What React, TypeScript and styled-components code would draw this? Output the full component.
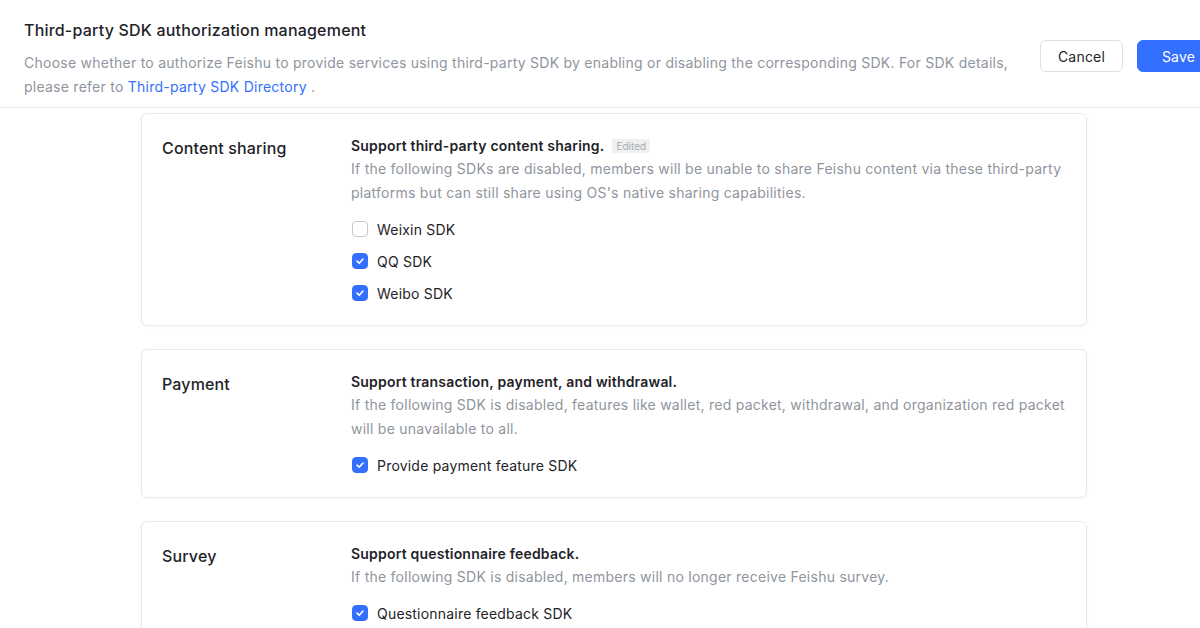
import React from "react";
import styled, { createGlobalStyle } from "styled-components";

const GlobalStyle = createGlobalStyle`
	html, body {
		margin: 0;
		padding: 0;
		background: #ffffff;
		overflow: hidden;
	}
	body {
		font-family: Inter, "Liberation Sans", Arial, sans-serif;
		color: #1f2329;
		-webkit-font-smoothing: antialiased;
	}
`;

interface ISdkItem {
	name: string;
	checked: boolean;
}

interface ISection {
	label: string;
	title: string;
	edited?: boolean;
	description: string;
	items: ISdkItem[];
}

const sections: ISection[] = [
	{
		label: "Content sharing",
		title: "Support third-party content sharing.",
		edited: true,
		description:
			"If the following SDKs are disabled, members will be unable to share Feishu content via these third-party platforms but can still share using OS's native sharing capabilities.",
		items: [
			{ name: "Weixin SDK", checked: false },
			{ name: "QQ SDK", checked: true },
			{ name: "Weibo SDK", checked: true },
		],
	},
	{
		label: "Payment",
		title: "Support transaction, payment, and withdrawal.",
		description:
			"If the following SDK is disabled, features like wallet, red packet, withdrawal, and organization red packet will be unavailable to all.",
		items: [{ name: "Provide payment feature SDK", checked: true }],
	},
	{
		label: "Survey",
		title: "Support questionnaire feedback.",
		description:
			"If the following SDK is disabled, members will no longer receive Feishu survey.",
		items: [{ name: "Questionnaire feedback SDK", checked: true }],
	},
];

const CheckIcon = (): JSX.Element => (
	<svg width="10" height="10" viewBox="0 0 10 10" fill="none">
		<path
			d="M2 5.2 4.2 7.2 8 3"
			stroke="#ffffff"
			strokeWidth="1.6"
			strokeLinecap="round"
			strokeLinejoin="round"
		/>
	</svg>
);

const SdkOption = ({ item }: { item: ISdkItem }): JSX.Element => (
	<Option>
		<Box $checked={item.checked}>{item.checked && <CheckIcon />}</Box>
		<span>{item.name}</span>
	</Option>
);

const SectionCard = ({ section }: { section: ISection }): JSX.Element => (
	<Card>
		<Label>{section.label}</Label>
		<div>
			<CardTitle>
				{section.title}
				{section.edited && <Tag>Edited</Tag>}
			</CardTitle>
			<CardDesc>{section.description}</CardDesc>
			<Options>
				{section.items.map((item) => (
					<SdkOption key={item.name} item={item} />
				))}
			</Options>
		</div>
	</Card>
);

const App = (): JSX.Element => {
	return (
		<Page>
			<GlobalStyle />
			<Header>
				<div>
					<Title>Third-party SDK authorization management</Title>
					<Description>
						<span>
							Choose whether to authorize Feishu to provide services using
							third-party SDK by enabling or disabling the corresponding SDK.
							For SDK details,
						</span>{" "}
						<span>please refer to</span>{" "}
						<DirectoryLink href="#">Third-party SDK Directory</DirectoryLink>{" "}
						<span>.</span>
					</Description>
				</div>
				<Actions>
					<Button>Cancel</Button>
					<Button $primary>Save</Button>
				</Actions>
			</Header>
			<Content>
				{sections.map((section) => (
					<SectionCard key={section.label} section={section} />
				))}
			</Content>
		</Page>
	);
};

const Page = styled.div`
	width: 1228px;
	height: 628px;
	overflow: hidden;
`;

const Header = styled.header`
	display: flex;
	justify-content: space-between;
	align-items: flex-start;
	gap: 20px;
	height: 108px;
	box-sizing: border-box;
	padding: 18px 8px 0 24px;
	border-bottom: 1px solid #e8e9eb;
`;

const Title = styled.h1`
	margin: 0 0 9px;
	font-size: 16px;
	font-weight: 500;
	line-height: 24px;
	letter-spacing: 0.2px;
	color: #1f2329;
`;

const Description = styled.p`
	margin: 0;
	max-width: 990px;
	font-size: 14px;
	line-height: 24px;
	letter-spacing: 0.25px;
	color: #8f959e;
`;

const DirectoryLink = styled.a`
	color: #3370ff;
	text-decoration: none;
`;

const Actions = styled.div`
	display: flex;
	gap: 14px;
	margin-top: 22px;
	flex-shrink: 0;
`;

const Button = styled.button<{ $primary?: boolean }>`
	width: 83px;
	height: 32px;
	border-radius: 6px;
	font-family: inherit;
	font-size: 14px;
	letter-spacing: 0.2px;
	cursor: pointer;
	border: 1px solid ${(p) => (p.$primary ? "#3370ff" : "#dee0e3")};
	background: ${(p) => (p.$primary ? "#3370ff" : "#ffffff")};
	color: ${(p) => (p.$primary ? "#ffffff" : "#1f2329")};
`;

const Content = styled.main`
	display: flex;
	flex-direction: column;
	gap: 23px;
	width: 946px;
	margin: 5px auto 0;
`;

const Card = styled.section`
	display: grid;
	grid-template-columns: 189px 1fr;
	padding: 21px 20px 16px 20px;
	border: 1px solid #e8e9eb;
	border-radius: 6px;
	box-sizing: border-box;
	box-shadow: 0 1px 3px rgba(31, 35, 41, 0.04);
`;

const Label = styled.div`
	padding-top: 1px;
	font-size: 16px;
	line-height: 24px;
	font-weight: 500;
	letter-spacing: 0.15px;
	color: #1f2329;
`;

const CardTitle = styled.div`
	display: flex;
	align-items: center;
	gap: 8px;
	font-size: 14px;
	line-height: 22px;
	font-weight: 600;
	letter-spacing: 0.2px;
	color: #1f2329;
`;

const Tag = styled.span`
	padding: 0 4px;
	font-size: 10px;
	line-height: 14px;
	font-weight: 400;
	letter-spacing: 0;
	border-radius: 2px;
	background: #eff0f1;
	color: #a8abb0;
`;

const CardDesc = styled.p`
	margin: 0;
	max-width: 720px;
	font-size: 14px;
	line-height: 24px;
	letter-spacing: 0.25px;
	color: #8f959e;
`;

const Options = styled.div`
	display: flex;
	flex-direction: column;
	margin-top: 8px;
`;

const Option = styled.label`
	display: flex;
	align-items: center;
	gap: 9px;
	height: 32px;
	font-size: 14px;
	letter-spacing: 0.2px;
	color: #1f2329;
`;

const Box = styled.span<{ $checked: boolean }>`
	display: flex;
	align-items: center;
	justify-content: center;
	width: 16px;
	height: 16px;
	box-sizing: border-box;
	border-radius: 4px;
	margin-left: 1px;
	border: 1px solid ${(p) => (p.$checked ? "#3370ff" : "#c4c7cc")};
	background: ${(p) => (p.$checked ? "#3370ff" : "#ffffff")};
`;

export default App;
